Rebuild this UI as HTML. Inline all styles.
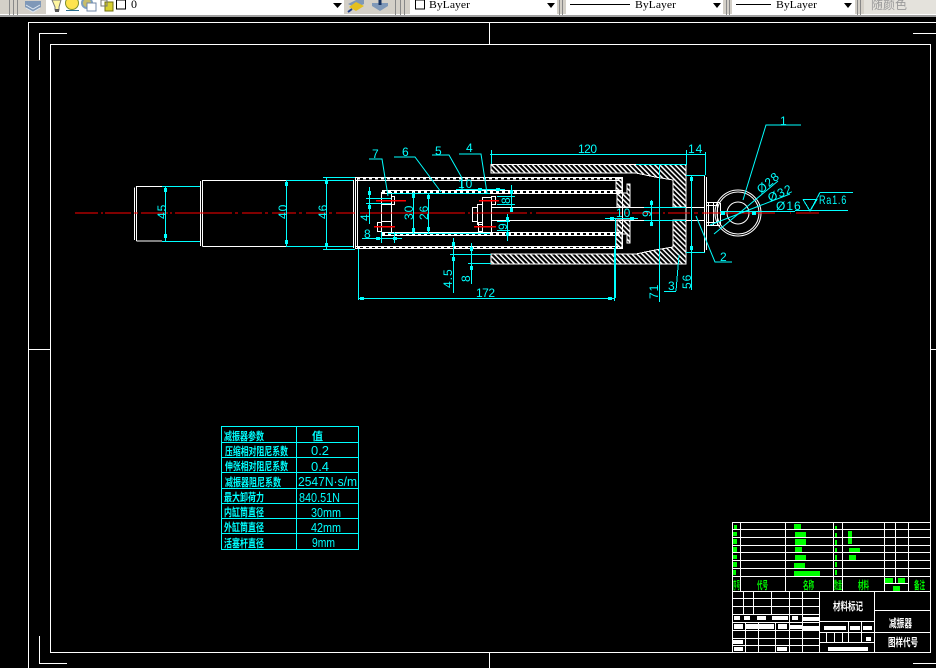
<!DOCTYPE html>
<html><head><meta charset="utf-8"><style>
html,body{margin:0;padding:0;width:936px;height:668px;overflow:hidden;background:#000}
svg{display:block}
text{font-family:"Liberation Sans","Noto Sans CJK SC",sans-serif}
.c{fill:#0ff;font-size:12px;letter-spacing:1px;font-family:"Liberation Mono",monospace}
.t{fill:#0ff;font-size:13px;font-family:"Liberation Mono",monospace}
.z{fill:#0ff;font-size:11px;font-weight:700}
.g{fill:#0f0;font-size:11px;font-weight:700}
.w{fill:#fff;font-size:11px;font-weight:700}
.b{font-family:"Liberation Serif",serif;font-size:11px;fill:#000}
</style></head><body>
<svg width="936" height="668" viewBox="0 0 936 668" xmlns="http://www.w3.org/2000/svg">
<defs>
<pattern id="h" width="3.6" height="3.6" patternUnits="userSpaceOnUse" patternTransform="rotate(-45)"><rect width="3.6" height="3.6" fill="#000"/><rect width="1.5" height="3.6" fill="#fff"/></pattern>
</defs>
<rect width="936" height="668" fill="#000"/>

<!-- toolbar -->
<rect width="936" height="16" fill="#d4d0c8"/>
<rect y="14" width="936" height="1" fill="#fff"/>
<rect y="15" width="936" height="2" fill="#a0a0a0"/>
<g fill="#fff">
<rect x="46" y="0" width="298" height="14"/><rect x="410" y="0" width="147" height="14"/>
<rect x="566" y="0" width="157" height="14"/><rect x="732" y="0" width="123" height="14"/>
</g>
<rect x="864" y="0" width="72" height="14" fill="#e4e2dc"/>
<g fill="#888"><rect x="9" y="0" width="1" height="15"/><rect x="13" y="0" width="1" height="15"/><rect x="17" y="0" width="1" height="15"/>
<rect x="395" y="0" width="1" height="15"/><rect x="400" y="0" width="1" height="15"/><rect x="404" y="0" width="1" height="15"/>
<rect x="559" y="0" width="1" height="15"/><rect x="562" y="0" width="1" height="15"/>
<rect x="726" y="0" width="1" height="15"/><rect x="729" y="0" width="1" height="15"/>
<rect x="857" y="0" width="1" height="15"/><rect x="860" y="0" width="1" height="15"/></g>
<path d="M25 1 L41 1 L41 7 L33 12 L25 7Z" fill="#7f98b8"/><path d="M26 5L33 9L40 5M26 8L33 12L40 8" stroke="#dfe8f2" fill="none"/>
<path d="M52 0H61L59 7V10H55V7Z" fill="#fff6a0" stroke="#777"/><rect x="55" y="9" width="4" height="3" fill="#555"/>
<circle cx="72" cy="3" r="6.5" fill="#ffe34d" stroke="#7f8f2a"/><rect x="66" y="10" width="13" height="1" fill="#2b6f90"/>
<circle cx="87" cy="3" r="5" fill="#c9bd6a" stroke="#7da0c0" stroke-width="2"/>
<rect x="87" y="3" width="9" height="8" fill="#fff" stroke="#6f87a8"/>
<rect x="105" y="2" width="8" height="9" fill="#d8d030" stroke="#6f6f10"/><rect x="101" y="0" width="6" height="6" fill="none" stroke="#777"/>
<rect x="116.500" y="0" width="9" height="9" fill="#fff" stroke="#000"/>
<text x="131" y="8" class="b" style="font-size:12px">0</text>
<path d="M333 3H342L337.500 8Z" fill="#000"/>
<path d="M348 4L356 0H364V4L356 8Z" fill="#7f98b8"/><path d="M349 7L356 11L364 6L356 2Z" fill="#e4c020"/><path d="M348 12L352 9" stroke="#1d3f8c" stroke-width="2"/>
<path d="M372 3H388V6L380 11L372 6Z" fill="#7f98b8"/><path d="M380 0V5" stroke="#14305f" stroke-width="3"/>
<rect x="415.500" y="0" width="9" height="9" fill="#fff" stroke="#000"/>
<text x="429" y="8" class="b" textLength="41" lengthAdjust="spacingAndGlyphs">ByLayer</text>
<path d="M547 3H555L551 8Z" fill="#000"/>
<rect x="570" y="4" width="60" height="1" fill="#000"/>
<text x="635" y="8" class="b" textLength="41" lengthAdjust="spacingAndGlyphs">ByLayer</text>
<path d="M713 3H721L717 8Z" fill="#000"/>
<rect x="736" y="4" width="35" height="1" fill="#000"/>
<text x="776" y="8" class="b" textLength="41" lengthAdjust="spacingAndGlyphs">ByLayer</text>
<path d="M844 3H852L848 8Z" fill="#000"/>
<text x="871" y="9" style="font-size:12px;fill:#9a9a9a">随颜色</text>

<!-- frame -->
<g stroke="#fff" fill="none" shape-rendering="crispEdges">
<path d="M28.500 668V22.500H936"/>
<path d="M39.500 60V33.500H67M913 33.500H936"/>
<path d="M50.500 652.500V44.500H930.500V652.500Z"/>
<path d="M489.500 22V44M489.500 652V668M28 349.500H50M930 349.500H936"/>
<path d="M39.500 636V663.500H67M913 663.500H936"/>
</g>

<!-- hatch -->
<g shape-rendering="crispEdges">
<path d="M491 164.500H686V264H491V254H636L655 250L673 247V220H686V207H673V180L655 177L636 173H491Z" fill="url(#h)" stroke="#fff"/>
<path d="M616 178.500H622V192H616ZM616 248.500H622V234H616Z" fill="url(#h)" stroke="#fff"/>
<path d="M617 193H627V184H630V207H617ZM617 234H627V243H630V220H617Z" fill="url(#h)" stroke="#fff"/>
</g>

<!-- white geometry -->
<g stroke="#fff" fill="none" shape-rendering="crispEdges">
<path d="M134.500 187.500V240M136.500 241H162M136.500 241V186.500H162"/>
<path d="M200.500 181V246M202.500 246.500H286M202.500 246.500V180.500H286"/>
<path d="M353.500 180V248M355.500 178V249M357.500 178V249"/>
<path d="M355 177.500H622.500V248.500H355M355 180.500H620M355 246.500H620"/>
<path d="M382 190.500H622M382 193.500H620M382 232.500H622M382 235.500H620"/>
<path d="M622.500 177.500V248.500"/>
<path d="M381.500 192V234M391.500 192V234M381 221.500H391M381 204.500H391"/>
<rect x="391.500" y="196.500" width="3" height="8"/><rect x="377.500" y="222.500" width="4" height="9"/>
<rect x="482.500" y="197.500" width="9" height="35"/>
<rect x="491.500" y="196.500" width="4" height="8"/><rect x="478.500" y="222.500" width="4" height="9"/>
<rect x="472.500" y="207.500" width="5" height="14"/><rect x="477.500" y="204.500" width="5" height="20"/>
<path d="M492 207.500H704M492 220.500H704"/>
<path d="M704.500 175V252M706.500 177V250M686 175.500H704M686 252.500H704"/>
<path d="M706 202.500H720M706 225.500H720M708.500 203V225M713.500 203V225M717.500 203V225M720.500 203V225M706 205.500H718M706 222.500H718"/>
</g>
<path d="M357 178.500H622M357 247.500H622M382 192H622M382 234H622" stroke="#fff" stroke-width="2" stroke-dasharray="3 3" shape-rendering="crispEdges"/>
<g stroke="#fff" fill="none"><circle cx="738" cy="213" r="21"/><circle cx="738" cy="213" r="23"/><circle cx="738" cy="213" r="11"/></g>

<!-- centerline -->
<path d="M75 213H98M101 213H103M105 213H131M134 213H138M141 213H168M170 213H172M175 213H232M235 213H238M242 213H262M265 213H268M272 213H296M299 213H302M306 213H326M329 213H332M336 213H355M360 213H465M468 213H470M473 213H527M530 213H532M536 213H622M625 213H628M632 213H660M663 213H665M668 213H690M694 213H698M702 213H775M790 213H791M796 213H819" stroke="#f00" shape-rendering="crispEdges" fill="none"/>
<path d="M376 200.500H406M374 226.500H395M479 200.500H499M474 226.500H496" stroke="#f00" stroke-width="1.500" shape-rendering="crispEdges" fill="none"/>

<!-- cyan dims -->
<g stroke="#0ff" fill="none" shape-rendering="crispEdges">
<path d="M162 186.500H200M162 241.500H200M165.500 186V241"/>
<path d="M286 180.500H353M286 246.500H353M286.500 180V246M326.500 178V249M323 177.500H355M323 249.500H355"/>
<path d="M491.500 150V164M490 154.500H705M686.500 150V165M705.500 152V175"/>
<path d="M659.500 165V302M691.500 175V290M636 164.500H686M686 175.500H705M686 252.500H705"/>
<path d="M358.500 249V300M614.500 248V301M358 298.500H615M615.500 218V298"/>
<path d="M605 218.500H638M366 198.500H391M366 203.500H391M369.500 187V224M362 238.500H402M381.500 232V243M394.500 232V243"/>
<path d="M388 193.500H490M388 233.500H490M413.500 192V234M428.500 193V233"/>
<path d="M456 189.500H505M497 196.500H515M497 204.500H515M511.500 185V212M497 221.500H510M497 230.500H510M507.500 214V241"/>
<path d="M450 254.500H491M468 263.500H491M453.500 238V293M471.500 243V284"/>
<path d="M651.500 200V225M644 207.500H686M644 220.500H686"/>
<path d="M664 291.500H676M676 291L679 255"/>
<path d="M795 210.500H848M803 199.500H817L810 211L803 199.500M810 211L820 192.500H853"/>
<path d="M720 211.500H795"/>
</g>
<g stroke="#0ff" fill="none">
<path d="M369 159H382L388 196"/><path d="M394 157H415L441 192"/><path d="M432 155H449L462 178V190"/><path d="M459 154H481L487 193"/>
<path d="M743 200L766 125H801"/><path d="M696 216L715 262H732"/>
<path d="M714 234L778 181"/><path d="M710 225L790 194"/>
</g>
<g fill="#0ff" shape-rendering="crispEdges">
<rect x="164" y="188" width="3" height="4"/><rect x="164" y="234" width="3" height="4"/>
<rect x="285" y="182" width="3" height="4"/><rect x="285" y="240" width="3" height="4"/>
<rect x="325" y="180" width="3" height="4"/><rect x="325" y="243" width="3" height="4"/>
<rect x="368" y="191" width="3" height="4"/><rect x="368" y="205" width="3" height="4"/>
<rect x="376" y="237" width="4" height="3"/><rect x="393" y="237" width="4" height="3"/>
<rect x="412" y="194" width="3" height="4"/><rect x="412" y="228" width="3" height="4"/>
<rect x="427" y="195" width="3" height="4"/><rect x="427" y="227" width="3" height="4"/>
<rect x="478" y="188" width="4" height="3"/><rect x="496" y="188" width="4" height="3"/>
<rect x="510" y="190" width="3" height="4"/><rect x="510" y="208" width="3" height="4"/>
<rect x="506" y="217" width="3" height="4"/><rect x="506" y="232" width="3" height="4"/>
<rect x="452" y="242" width="3" height="4"/><rect x="452" y="257" width="3" height="4"/>
<rect x="470" y="247" width="3" height="4"/><rect x="470" y="266" width="3" height="4"/>
<rect x="360" y="297" width="4" height="3"/><rect x="608" y="297" width="4" height="3"/>
<rect x="610" y="217" width="4" height="3"/><rect x="630" y="217" width="4" height="3"/>
<rect x="650" y="201" width="3" height="4"/><rect x="650" y="222" width="3" height="4"/>
<rect x="690" y="177" width="3" height="4"/><rect x="690" y="246" width="3" height="4"/>
<rect x="721" y="212" width="4" height="3"/><rect x="752" y="212" width="4" height="3"/>
</g>

<!-- cyan dim text -->
<g class="c">
<text x="578" y="153" textLength="20">120</text><text x="688" y="153">14</text>
<text x="476" y="297" textLength="20">172</text>
<text x="372" y="158">7</text><text x="402" y="156">6</text><text x="435" y="155">5</text><text x="466" y="152">4</text>
<text x="458" y="188">10</text><text x="616" y="217">10</text>
<text x="780" y="125">1</text><text x="720" y="261">2</text><text x="668" y="290">3</text>
<text x="364" y="238">8</text>
<text x="819" y="204" textLength="28" lengthAdjust="spacingAndGlyphs">Ra1.6</text>
<text transform="translate(776,210)">Ø16</text>
<text transform="translate(770,202) rotate(-24)">Ø32</text>
<text transform="translate(761,194) rotate(-40)">Ø28</text>
<text transform="translate(166,219) rotate(-90)">45</text>
<text transform="translate(287,219) rotate(-90)">40</text>
<text transform="translate(327,219) rotate(-90)">46</text>
<text transform="translate(413,220) rotate(-90)">30</text>
<text transform="translate(428,220) rotate(-90)">26</text>
<text transform="translate(369,221) rotate(-90)">4</text>
<text transform="translate(510,204) rotate(-90)">8</text>
<text transform="translate(507,230) rotate(-90)">9</text>
<text transform="translate(452,288) rotate(-90)">4.5</text>
<text transform="translate(470,282) rotate(-90)">8</text>
<text transform="translate(651,217) rotate(-90)">9</text>
<text transform="translate(658,299) rotate(-90)">71</text>
<text transform="translate(691,289) rotate(-90)">56</text>
</g>

<!-- parameter table -->
<g stroke="#0ff" fill="none" shape-rendering="crispEdges">
<path d="M221.500 426.500H358.500V549.500H221.500ZM296.500 426V549M221 442.500H358M221 457.500H358M221 472.500H358M221 488.500H358M221 503.500H358M221 518.500H358M221 533.500H358"/>
</g>
<g class="z">
<text x="224" y="440" textLength="40" lengthAdjust="spacingAndGlyphs">减振器参数</text>
<text x="225" y="455" textLength="63" lengthAdjust="spacingAndGlyphs">压缩相对阻尼系数</text>
<text x="225" y="470" textLength="63" lengthAdjust="spacingAndGlyphs">伸张相对阻尼系数</text>
<text x="225" y="486" textLength="56" lengthAdjust="spacingAndGlyphs">减振器阻尼系数</text>
<text x="224" y="501" textLength="40" lengthAdjust="spacingAndGlyphs">最大卸荷力</text>
<text x="224" y="516" textLength="40" lengthAdjust="spacingAndGlyphs">内缸筒直径</text>
<text x="224" y="531" textLength="40" lengthAdjust="spacingAndGlyphs">外缸筒直径</text>
<text x="224" y="547" textLength="40" lengthAdjust="spacingAndGlyphs">活塞杆直径</text>
</g>
<g class="t">
<text x="312" y="440" class="z">值</text>
<text x="311" y="455" textLength="18" lengthAdjust="spacingAndGlyphs">0.2</text><text x="311" y="471" textLength="18" lengthAdjust="spacingAndGlyphs">0.4</text>
<text x="298" y="486" textLength="59" lengthAdjust="spacingAndGlyphs">2547N·s/m</text>
<text x="299" y="502" textLength="41" lengthAdjust="spacingAndGlyphs">840.51N</text>
<text x="311" y="517" textLength="30" lengthAdjust="spacingAndGlyphs">30mm</text><text x="311" y="532" textLength="30" lengthAdjust="spacingAndGlyphs">42mm</text><text x="312" y="547" textLength="23" lengthAdjust="spacingAndGlyphs">9mm</text>
</g>

<!-- title block -->
<g stroke="#fff" fill="none" shape-rendering="crispEdges">
<path d="M732.500 522.500H931M732 529.500H931M732 537.500H931M732 545.500H931M732 552.500H931M732 560.500H931M732 568.500H931M732 576.500H931M732 591.500H930"/>
<path d="M732.500 522V652M740.500 522V591M785.500 522V591M833.500 522V591M842.500 522V591M884.500 522V591M895.500 522V584M908.500 522V591M884 583.500H908"/>
<path d="M732 598.500H819M732 606.500H819M732 614.500H819M732 622.500H819M732 630.500H819M732 638.500H819M732 645.500H819"/>
<path d="M743.500 591V614M753.500 591V614M771.500 591V614M789.500 591V652M802.500 591V652M745.500 622V652M758.500 622V652M775.500 622V652"/>
<path d="M819.500 591V652M874.500 591V652M874 610.500H930M874 632.500H930M819 621.500H874M819 632.500H874M819 642.500H874"/>
<path d="M826.500 632V642M834.500 632V642M842.500 632V642M848.500 622V642M861.500 622V642"/>
</g>
<g fill="#0f0" shape-rendering="crispEdges">
<rect x="794" y="524" width="7" height="5"/><rect x="795" y="532" width="11" height="5"/><rect x="795" y="539" width="11" height="6"/><rect x="795" y="547" width="7" height="5"/><rect x="795" y="555" width="11" height="5"/><rect x="794" y="563" width="11" height="5"/><rect x="794" y="571" width="26" height="5"/>
<rect x="734" y="525" width="3" height="4"/><rect x="733" y="532" width="4" height="4"/><rect x="733" y="539" width="4" height="5"/><rect x="733" y="547" width="4" height="5"/><rect x="733" y="555" width="4" height="4"/><rect x="733" y="562" width="4" height="5"/><rect x="733" y="570" width="3" height="5"/>
<rect x="835" y="526" width="2" height="3"/><rect x="835" y="533" width="2" height="4"/><rect x="835" y="540" width="2" height="5"/><rect x="835" y="548" width="2" height="4"/><rect x="835" y="555" width="2" height="5"/><rect x="835" y="562" width="2" height="5"/><rect x="835" y="570" width="2" height="5"/>
<rect x="848" y="531" width="4" height="6"/><rect x="848" y="538" width="4" height="6"/><rect x="849" y="548" width="11" height="4"/><rect x="849" y="555" width="7" height="5"/>
<rect x="885" y="578" width="8" height="5"/><rect x="898" y="578" width="7" height="5"/><rect x="893" y="586" width="7" height="5"/>
</g>
<g class="g">
<text x="733" y="589" textLength="7" lengthAdjust="spacingAndGlyphs">序号</text><text x="757" y="589" textLength="11" lengthAdjust="spacingAndGlyphs">代号</text>
<text x="803" y="589" textLength="11" lengthAdjust="spacingAndGlyphs">名称</text><text x="834" y="589" textLength="8" lengthAdjust="spacingAndGlyphs">数量</text>
<text x="858" y="589" textLength="11" lengthAdjust="spacingAndGlyphs">材料</text><text x="914" y="589" textLength="11" lengthAdjust="spacingAndGlyphs">备注</text>
</g>
<g class="w">
<text x="833" y="610" textLength="30" lengthAdjust="spacingAndGlyphs">材料标记</text>
<text x="889" y="627" textLength="23" lengthAdjust="spacingAndGlyphs">减振器</text>
<text x="888" y="646" textLength="30" lengthAdjust="spacingAndGlyphs">图样代号</text>
</g>
<g fill="#fff" shape-rendering="crispEdges">
<rect x="734" y="616" width="6" height="4"/><rect x="744" y="616" width="6" height="4"/><rect x="757" y="616" width="9" height="4"/><rect x="772" y="616" width="16" height="4"/><rect x="792" y="616" width="6" height="4"/>
<rect x="734" y="624" width="9" height="5"/><rect x="746" y="624" width="28" height="5"/><rect x="778" y="624" width="9" height="5"/><rect x="790" y="625" width="12" height="4"/>
<rect x="803" y="617" width="16" height="4"/><rect x="803" y="626" width="16" height="4"/>
<rect x="733" y="640" width="10" height="4"/><rect x="734" y="647" width="9" height="4"/><rect x="777" y="647" width="10" height="4"/>
<rect x="824" y="626" width="22" height="4"/><rect x="850" y="626" width="10" height="4"/><rect x="863" y="626" width="9" height="4"/>
<rect x="866" y="637" width="5" height="4"/><rect x="828" y="647" width="40" height="4"/>
</g>
</svg>
</body></html>
